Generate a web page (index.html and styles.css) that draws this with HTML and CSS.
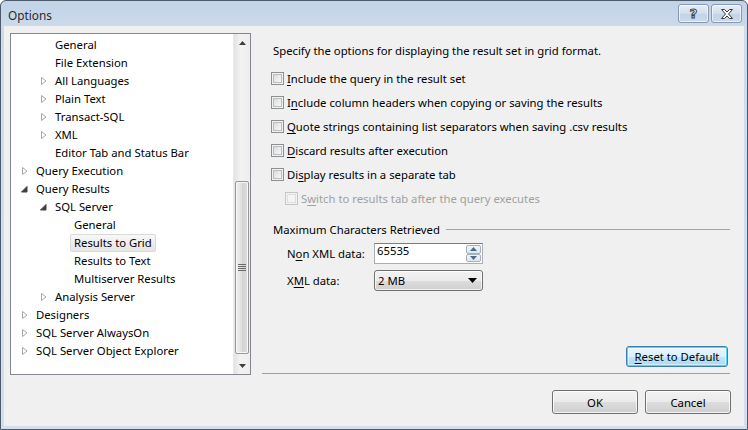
FILE: index.html
```html
<!DOCTYPE html>
<html lang="en">
	<head>
		<meta charset="UTF-8" />
		<title>Options</title>
		<link rel="stylesheet" href="styles.css">
	</head>
	<body>
		<div class="window">
			<div class="titlebar">
				<span class="title">Options</span>
				<div class="caption-btns">
					<span class="cap-btn help">?</span>
					<span class="cap-btn close">
						<svg width="14" height="10" viewBox="0 0 14 10">
							<path d="M1.5 0.5h3l2.5 2.5 2.5-2.5h3l-4 4.5 4 4.5h-3l-2.5-2.5-2.5 2.5h-3l4-4.5z" fill="#fff" stroke="#3a3a3a" stroke-width="1" stroke-linejoin="round"/>
						</svg>
					</span>
				</div>
			</div>

			<div class="client">
				<div class="main">
					<div class="tree">
						<div class="tree-items">
							<div class="node l1"><span class="tw"></span><span class="label">General</span></div>
							<div class="node l1"><span class="tw"></span><span class="label">File Extension</span></div>
							<div class="node l1"><span class="tw"><svg class="closed" width="6" height="8" viewBox="0 0 6 8"><path d="M0.5 0.5L5 4L0.5 7.5Z" fill="#fff" stroke="#a6a6a6"/></svg></span><span class="label">All Languages</span></div>
							<div class="node l1"><span class="tw"><svg class="closed" width="6" height="8" viewBox="0 0 6 8"><path d="M0.5 0.5L5 4L0.5 7.5Z" fill="#fff" stroke="#a6a6a6"/></svg></span><span class="label">Plain Text</span></div>
							<div class="node l1"><span class="tw"><svg class="closed" width="6" height="8" viewBox="0 0 6 8"><path d="M0.5 0.5L5 4L0.5 7.5Z" fill="#fff" stroke="#a6a6a6"/></svg></span><span class="label">Transact-SQL</span></div>
							<div class="node l1"><span class="tw"><svg class="closed" width="6" height="8" viewBox="0 0 6 8"><path d="M0.5 0.5L5 4L0.5 7.5Z" fill="#fff" stroke="#a6a6a6"/></svg></span><span class="label">XML</span></div>
							<div class="node l1"><span class="tw"></span><span class="label">Editor Tab and Status Bar</span></div>
							<div class="node l0"><span class="tw"><svg class="closed" width="6" height="8" viewBox="0 0 6 8"><path d="M0.5 0.5L5 4L0.5 7.5Z" fill="#fff" stroke="#a6a6a6"/></svg></span><span class="label">Query Execution</span></div>
							<div class="node l0"><span class="tw"><svg class="open" width="7" height="7" viewBox="0 0 7 7"><path d="M6 0.5V6H0.5Z" fill="#404040" stroke="#404040" stroke-linejoin="round"/></svg></span><span class="label">Query Results</span></div>
							<div class="node l1"><span class="tw"><svg class="open" width="7" height="7" viewBox="0 0 7 7"><path d="M6 0.5V6H0.5Z" fill="#404040" stroke="#404040" stroke-linejoin="round"/></svg></span><span class="label">SQL Server</span></div>
							<div class="node l2"><span class="tw"></span><span class="label">General</span></div>
							<div class="node l2"><span class="tw"></span><span class="label selected">Results to Grid</span></div>
							<div class="node l2"><span class="tw"></span><span class="label">Results to Text</span></div>
							<div class="node l2"><span class="tw"></span><span class="label">Multiserver Results</span></div>
							<div class="node l1"><span class="tw"><svg class="closed" width="6" height="8" viewBox="0 0 6 8"><path d="M0.5 0.5L5 4L0.5 7.5Z" fill="#fff" stroke="#a6a6a6"/></svg></span><span class="label">Analysis Server</span></div>
							<div class="node l0"><span class="tw"><svg class="closed" width="6" height="8" viewBox="0 0 6 8"><path d="M0.5 0.5L5 4L0.5 7.5Z" fill="#fff" stroke="#a6a6a6"/></svg></span><span class="label">Designers</span></div>
							<div class="node l0"><span class="tw"><svg class="closed" width="6" height="8" viewBox="0 0 6 8"><path d="M0.5 0.5L5 4L0.5 7.5Z" fill="#fff" stroke="#a6a6a6"/></svg></span><span class="label">SQL Server AlwaysOn</span></div>
							<div class="node l0"><span class="tw"><svg class="closed" width="6" height="8" viewBox="0 0 6 8"><path d="M0.5 0.5L5 4L0.5 7.5Z" fill="#fff" stroke="#a6a6a6"/></svg></span><span class="label">SQL Server Object Explorer</span></div>
						</div>
						<div class="scrollbar">
							<div class="sb-arrow">
								<svg width="7" height="4" viewBox="0 0 7 4"><path d="M3.5 0L7 4H0Z" fill="#3d3d3d"/></svg>
							</div>
							<div class="sb-track">
								<div class="sb-thumb">
									<svg width="8" height="7" viewBox="0 0 8 7"><path d="M0 0.5h8M0 2.5h8M0 4.5h8M0 6.5h8" stroke="#6b6b6b"/></svg>
								</div>
							</div>
							<div class="sb-arrow">
								<svg width="7" height="4" viewBox="0 0 7 4"><path d="M0 0H7L3.5 4Z" fill="#3d3d3d"/></svg>
							</div>
						</div>
					</div>

					<div class="page">
						<div class="intro">Specify the options for displaying the result set in grid format.</div>

						<div class="check"><span class="box"></span><span><u>I</u>nclude the query in the result set</span></div>
						<div class="check"><span class="box"></span><span>I<u>n</u>clude column headers when copying or saving the results</span></div>
						<div class="check"><span class="box"></span><span><u>Q</u>uote strings containing list separators when saving .csv results</span></div>
						<div class="check"><span class="box"></span><span><u>D</u>iscard results after execution</span></div>
						<div class="check"><span class="box"></span><span>Di<u>s</u>play results in a separate tab</span></div>
						<div class="check sub disabled"><span class="box"></span><span>S<u>w</u>itch to results tab after the query executes</span></div>

						<div class="group-title"><span>Maximum Characters Retrieved</span></div>

						<div class="field">
							<label>N<u>o</u>n XML data:</label>
							<div class="spin">
								<span class="spin-value">65535</span>
								<div class="spin-btns">
									<span class="spin-btn"><svg width="7" height="4" viewBox="0 0 7 4"><path d="M3.5 0L7 4H0Z" fill="#4a6b8c"/></svg></span>
									<span class="spin-btn"><svg width="7" height="4" viewBox="0 0 7 4"><path d="M0 0H7L3.5 4Z" fill="#4a6b8c"/></svg></span>
								</div>
							</div>
						</div>
						<div class="field">
							<label>X<u>M</u>L data:</label>
							<div class="combo">
								<span>2 MB</span>
								<svg width="9" height="5" viewBox="0 0 9 5"><path d="M0 0H9L4.5 5Z" fill="#000"/></svg>
							</div>
						</div>

						<div class="page-actions">
							<span class="btn default"><u>R</u>eset to Default</span>
						</div>
					</div>
				</div>

				<div class="footer">
					<span class="btn wide">OK</span>
					<span class="btn wide">Cancel</span>
				</div>
			</div>
		</div>
	</body>
</html>
```

FILE: styles.css
```css
* {
	box-sizing: border-box;
}
body {
	margin: 0;
	font-family: "Noto Sans", "Open Sans", sans-serif;
	font-size: 11.3px;
	color: #000;
	background: #fff;
}
u {
	text-decoration: underline;
	text-underline-offset: 2px;
}
.window {
	width: 748px;
	height: 430px;
	border: 1px solid #4d5a6a;
	border-radius: 6px 6px 0 0;
	background: linear-gradient(#c2d3e8, #cddbeb 30px, #d3dfee);
	padding: 0 3px 3px 3px;
	display: flex;
	flex-direction: column;
}
.titlebar {
	height: 25px;
	display: flex;
	align-items: flex-start;
	justify-content: space-between;
	flex-shrink: 0;
}
.title {
	margin: 6px 0 0 4px;
	font-size: 11.8px;
	color: #2b2b2b;
	line-height: 16px;
}
.caption-btns {
	display: flex;
	gap: 2px;
	margin: 3px 2px 0 0;
}
.cap-btn {
	width: 31px;
	height: 19px;
	border: 1px solid #8699b0;
	border-radius: 3px;
	background: linear-gradient(#e6eef8, #d2deed 50%, #c3d3e6 51%, #cbd9ea);
	box-shadow: inset 0 0 0 1px rgba(255, 255, 255, 0.6);
	display: flex;
	align-items: center;
	justify-content: center;
}
.cap-btn.help {
	font-family: "DejaVu Sans", sans-serif;
	font-size: 13px;
	font-weight: bold;
	color: #fff;
	-webkit-text-stroke: 1px #3a3a3a;
	line-height: 1;
}
.client {
	flex: 1;
	background: #f0f0f0;
	display: flex;
	flex-direction: column;
}
.main {
	display: flex;
	gap: 11px;
	padding: 7px 14px 0 6px;
}
.tree {
	width: 241px;
	height: 342px;
	border: 1px solid #828790;
	background: #fff;
	display: flex;
	justify-content: space-between;
}
.tree-items {
	padding-top: 2px;
	flex: 1;
}
.node {
	height: 18px;
	display: flex;
	align-items: center;
	white-space: nowrap;
}
.node.l0 {
	padding-left: 6px;
}
.node.l1 {
	padding-left: 25px;
}
.node.l2 {
	padding-left: 44px;
}
.tw {
	width: 15px;
	height: 18px;
	display: flex;
	align-items: center;
	padding-left: 5px;
}
.tw .open {
	margin-left: -1px;
}
.label {
	padding: 0 3px;
	border: 1px solid transparent;
	line-height: 16px;
	border-radius: 2px;
}
.label.selected {
	background: linear-gradient(#f8f8f8, #e5e5e5);
	border-color: #d9d9d9;
}
.scrollbar {
	width: 17px;
	background: linear-gradient(to right, #e3e3e3, #f2f2f2 40%, #eeeeee);
	border-left: 1px solid #eaeaea;
	display: flex;
	flex-direction: column;
}
.sb-arrow {
	height: 17px;
	display: flex;
	align-items: center;
	justify-content: center;
}
.sb-track {
	flex: 1;
	display: flex;
	flex-direction: column;
	justify-content: flex-end;
	padding: 0 1px 3px 1px;
}
.sb-thumb {
	height: 173px;
	border: 1px solid #979797;
	border-radius: 2px;
	background: linear-gradient(to right, #f0f0f0, #e0e0e0 45%, #d3d3d3 55%, #dedede);
	box-shadow: inset 0 0 0 1px #f7f7f7;
	display: flex;
	align-items: center;
	justify-content: center;
}
.page {
	width: 468px;
	height: 341px;
	border-bottom: 1px solid #a0a0a0;
	display: flex;
	flex-direction: column;
	padding-left: 9px;
}
.intro {
	line-height: 16px;
	margin: 10px 0 7px 2px;
}
.check {
	height: 24px;
	display: flex;
	align-items: center;
	gap: 3px;
	white-space: nowrap;
}
.check.sub {
	padding-left: 14px;
}
.box {
	width: 13px;
	height: 13px;
	border: 1px solid #8e8f8f;
	background: linear-gradient(135deg, #cfd1d4, #f4f4f4 70%, #fbfbfb);
	box-shadow: inset 0 0 0 1px #f2f2f2, inset 0 0 0 2px #b9bcc0;
	flex-shrink: 0;
}
.check.disabled {
	color: #a0a0a0;
}
.check.disabled .box {
	border-color: #c5c5c5;
	background: #f4f4f4;
	box-shadow: inset 0 0 0 1px #f4f4f4, inset 0 0 0 2px #dedede;
}
.group-title {
	display: flex;
	align-items: center;
	gap: 6px;
	margin: 12px 0 2px 2px;
	line-height: 16px;
	white-space: nowrap;
}
.group-title::after {
	content: "";
	flex: 1;
	border-top: 1px solid #a6a6a6;
	margin-top: -2px;
}
.field {
	display: flex;
	align-items: center;
	height: 27px;
	padding-left: 16px;
}
.field label {
	width: 87px;
}
.spin {
	width: 109px;
	height: 21px;
	border: 1px solid #abadb3;
	border-top-color: #7a7c82;
	background: #fff;
	display: flex;
	justify-content: space-between;
}
.spin-value {
	padding: 0 0 0 2px;
	line-height: 14px;
}
.spin-btns {
	display: flex;
	flex-direction: column;
	padding: 1px;
	width: 17px;
}
.spin-btn {
	flex: 1;
	border: 1px solid #a7b1bd;
	border-radius: 2px;
	background: linear-gradient(#f2f5f8, #dfe5ec);
	display: flex;
	align-items: center;
	justify-content: center;
}
.combo {
	width: 109px;
	height: 21px;
	border: 1px solid #707070;
	border-radius: 3px;
	background: linear-gradient(#f2f2f2, #ebebeb 50%, #dddddd 51%, #cfcfcf);
	box-shadow: inset 0 0 0 1px rgba(255, 255, 255, 0.7);
	display: flex;
	align-items: center;
	justify-content: space-between;
	padding: 0 5px 0 3px;
}
.page-actions {
	margin-top: auto;
	margin-bottom: 6px;
	display: flex;
	justify-content: flex-end;
	padding-right: 2px;
}
.btn {
	height: 21px;
	padding: 0 8px;
	border: 1px solid #707070;
	border-radius: 3px;
	background: linear-gradient(#f2f2f2, #ebebeb 50%, #dddddd 51%, #cfcfcf);
	box-shadow: inset 0 0 0 1px rgba(255, 255, 255, 0.75);
	display: flex;
	align-items: center;
	justify-content: center;
	white-space: nowrap;
}
.btn.default {
	width: 102px;
	border-color: #3c7fb1;
	box-shadow: inset 0 0 0 1px #48d7fb, inset 0 0 0 2px rgba(255, 255, 255, 0.5);
	background: linear-gradient(#eaf6fd, #d9f0fc 50%, #bee6fd 51%, #a7d9f5);
}
.footer {
	display: flex;
	justify-content: flex-end;
	gap: 7px;
	padding: 15px 13px 0 0;
}
.btn.wide {
	width: 86px;
	height: 24px;
}
```
